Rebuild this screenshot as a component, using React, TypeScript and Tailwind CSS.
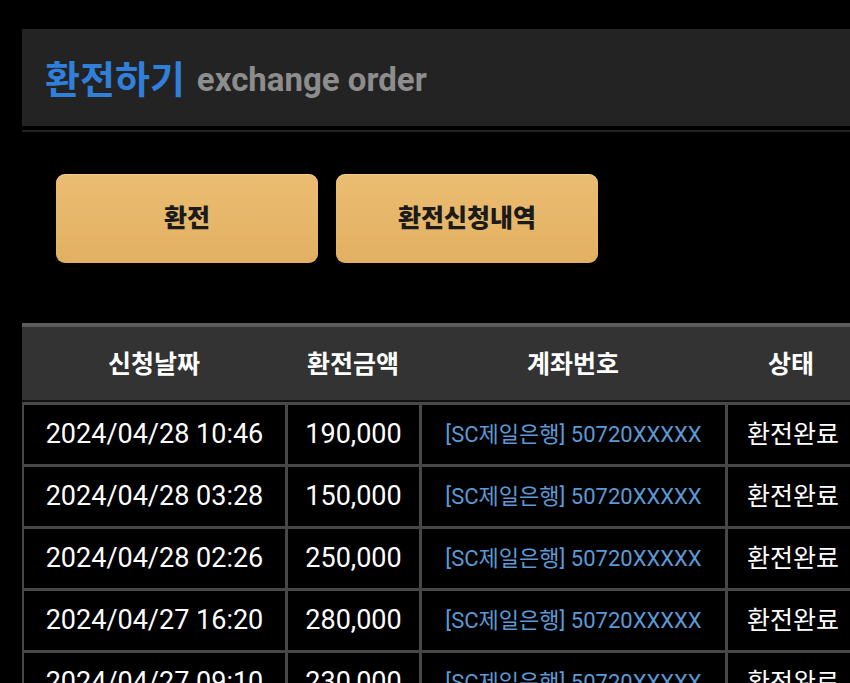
import React from "react";

const rows = [
  ["2024/04/28 10:46", "190,000"],
  ["2024/04/28 03:28", "150,000"],
  ["2024/04/28 02:26", "250,000"],
  ["2024/04/27 16:20", "280,000"],
  ["2024/04/27 09:10", "230,000"],
];

const font = { fontFamily: 'Roboto, "Noto Sans CJK KR", sans-serif' };

export default function App() {
  return (
    <div className="w-[850px] h-[683px] overflow-hidden bg-black" style={font}>
      <div className="w-[880px] pl-[22px] pt-[29px]">
        <div className="h-[97px] bg-[#232323] flex items-center pl-[23px] gap-[12px] pt-[4px]">
          <span className="text-[38px] font-bold text-[#2f7fdb] leading-none">환전하기</span>
          <span className="text-[33px] font-bold text-[#8d8d8d] leading-none">exchange order</span>
        </div>
        <div className="mt-[4px] h-[2px] bg-[#222222]" />
        <div className="flex gap-[18px] pl-[34px] pt-[42px] pb-[60px]">
          <button className="w-[262px] h-[89px] rounded-[9px] bg-gradient-to-b from-[#ebbd72] to-[#e2b062] shadow-[1px_2px_3px_rgba(0,0,0,0.7),inset_0_1px_1px_rgba(255,230,180,0.4)] text-[25px] font-black text-[#1b1b1b]">
            환전
          </button>
          <button className="w-[262px] h-[89px] rounded-[9px] bg-gradient-to-b from-[#ebbd72] to-[#e2b062] shadow-[1px_2px_3px_rgba(0,0,0,0.7),inset_0_1px_1px_rgba(255,230,180,0.4)] text-[25px] font-black text-[#1b1b1b]">
            환전신청내역
          </button>
        </div>
        <div className="w-[834px]">
          <div className="border-t-4 border-[#5c5c5c] bg-[#333333] h-[77px] grid grid-cols-[264px_134px_306px_130px] items-center text-[25px] font-bold text-white text-center pt-[3px]">
            <div>신청날짜</div>
            <div>환전금액</div>
            <div>계좌번호</div>
            <div>상태</div>
          </div>
          <div className="h-[2px] bg-[#111111]" />
          {rows.map(([d, a], i) => (
            <div
              key={i}
              className="grid grid-cols-[264px_134px_306px_130px] h-[62px] border-t-[3px] border-l-2 border-[#474747] bg-black text-white"
            >
              <div className="border-r-[3px] border-[#474747] flex items-center justify-center text-[27px]">{d}</div>
              <div className="border-r-[3px] border-[#474747] flex items-center justify-center text-[27px]">{a}</div>
              <div className="border-r-[3px] border-[#474747] flex items-center justify-center text-[22px] text-[#5b9ad6]">[SC제일은행] 50720XXXXX</div>
              <div className="flex items-center justify-center text-[25px]">환전완료</div>
            </div>
          ))}
        </div>
      </div>
    </div>
  );
}
